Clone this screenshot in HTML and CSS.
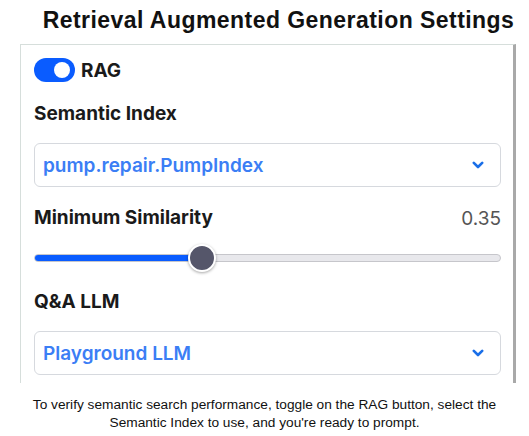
FILE: index.html
```html
<!DOCTYPE html>
<html>
<head>
<meta charset="utf-8">
<link rel="stylesheet" href="styles.css">
</head>
<body>
<h1 class="title">Retrieval Augmented Generation Settings</h1>
<div class="panel">
  <div class="toggle-row">
    <span class="toggle"><span class="knob"></span></span>
    <span class="toggle-label">RAG</span>
  </div>
  <div class="label label-index">Semantic Index</div>
  <div class="select">
    <span class="select-text">pump.repair.PumpIndex</span>
    <svg class="chev" width="12" height="8" viewBox="0 0 12 8"><path d="M1.8 1.8 L6 6 L10.2 1.8" fill="none" stroke="#1a6fe8" stroke-width="2.6" stroke-linecap="round" stroke-linejoin="round"/></svg>
  </div>
  <div class="label-row">
    <span class="label">Minimum Similarity</span>
    <span class="value">0.35</span>
  </div>
  <div class="slider">
    <div class="track"><div class="fill" style="width:calc((100% - 28px) * 0.35 + 14px)"></div></div>
    <div class="thumb" style="left:calc((100% - 28px) * 0.35)"></div>
  </div>
  <div class="label label-llm">Q&amp;A LLM</div>
  <div class="select">
    <span class="select-text">Playground LLM</span>
    <svg class="chev" width="12" height="8" viewBox="0 0 12 8"><path d="M1.8 1.8 L6 6 L10.2 1.8" fill="none" stroke="#1a6fe8" stroke-width="2.6" stroke-linecap="round" stroke-linejoin="round"/></svg>
  </div>
</div>
<p class="note">To verify semantic search performance, toggle on the RAG button, select the<br>Semantic Index to use, and you're ready to prompt.</p>
</body>
</html>
```
FILE: styles.css
```css
html, body {
  margin: 0;
  padding: 0;
  background: #ffffff;
}
body {
  width: 529px;
  height: 436px;
  overflow: hidden;
}
.title {
  margin: 0;
  padding: 8px 0 0 28px;
  height: 36px;
  box-sizing: border-box;
  text-align: center;
  font-family: "Liberation Sans", Arial, sans-serif;
  font-weight: bold;
  font-size: 23px;
  letter-spacing: 0.45px;
  line-height: 24px;
  color: #111;
  white-space: nowrap;
}
.panel {
  margin: 8px 0 0 20px;
  width: 496px;
  height: 339px;
  box-sizing: border-box;
  border-top: 1px solid #d6dedb;
  border-left: 1px solid #d6dedb;
  border-right: 3px solid #a9a9a9;
  padding: 13px 12px 0 13px;
  overflow: hidden;
  font-family: Inter, "Noto Sans", sans-serif;
  color: #1a1a1a;
}
.toggle-row {
  display: flex;
  align-items: center;
  gap: 6px;
  height: 24px;
}
.toggle {
  position: relative;
  width: 41px;
  height: 24px;
  border-radius: 12px;
  background: #0a5cff;
  display: block;
}
.knob {
  position: absolute;
  right: 5px;
  top: 4px;
  width: 16px;
  height: 16px;
  border-radius: 50%;
  background: #fff;
}
.toggle-label {
  font-weight: 700;
  font-size: 19px;
}
.label {
  font-weight: 700;
  font-size: 19px;
  line-height: 24px;
}
.label-index {
  margin-top: 20px;
}
.select {
  margin-top: 17px;
  height: 44px;
  box-sizing: border-box;
  border: 1px solid #d6d9de;
  border-radius: 6px;
  display: flex;
  align-items: center;
  justify-content: space-between;
  padding: 0 16px 0 8px;
}
.select-text {
  color: #3b7ef5;
  font-weight: 600;
  font-size: 19px;
}
.label-row {
  margin-top: 19px;
  display: flex;
  justify-content: space-between;
  align-items: center;
}
.value {
  font-size: 19px;
  color: #555;
}
.slider {
  position: relative;
  margin-top: 14px;
  height: 28px;
  display: flex;
  align-items: center;
}
.track {
  width: 100%;
  height: 8px;
  box-sizing: border-box;
  border: 1px solid #c6c6cb;
  border-radius: 4px;
  background: #e8e8ec;
  overflow: hidden;
}
.fill {
  height: 100%;
  background: #0a5cff;
}
.thumb {
  position: absolute;
  top: 0;
  width: 28px;
  height: 28px;
  box-sizing: border-box;
  border-radius: 50%;
  background: #55566a;
  border: 2px solid #fff;
  box-shadow: 0 1px 3px rgba(0,0,0,0.35);
}
.label-llm {
  margin-top: 18px;
}
.note {
  margin: 13px 0 0 0;
  text-align: center;
  font-family: "Liberation Sans", Arial, sans-serif;
  font-size: 13.7px;
  line-height: 18px;
  color: #111;
}
```
